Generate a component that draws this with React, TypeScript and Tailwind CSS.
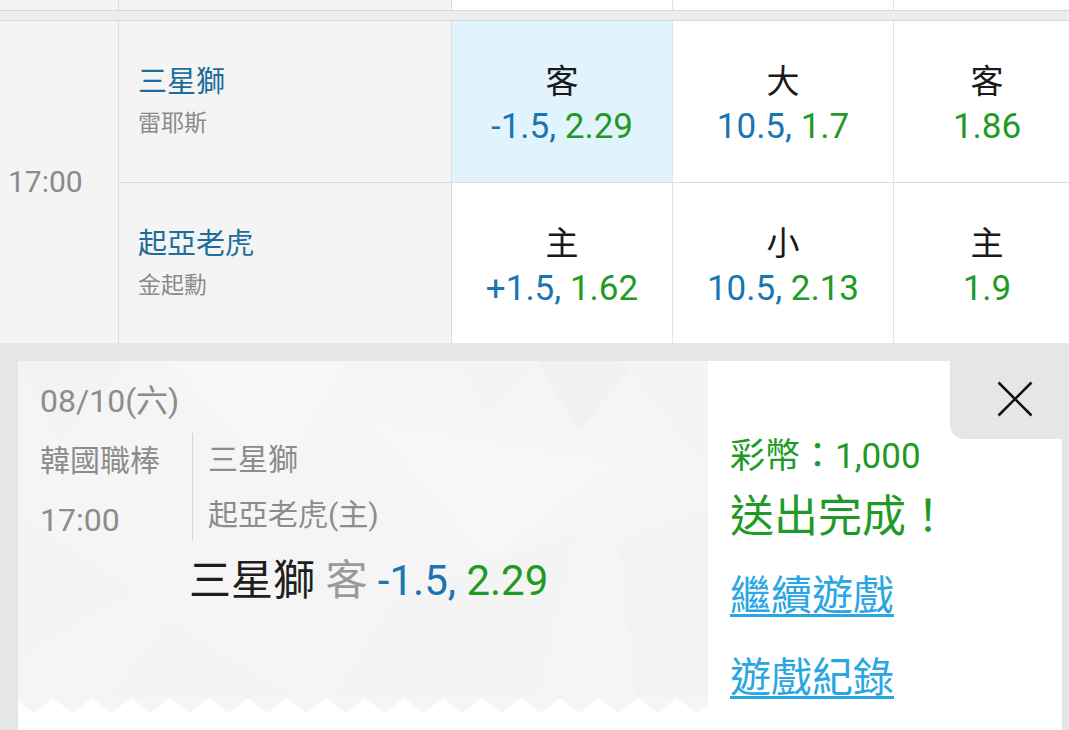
import React from "react";

const FONT = "font-['Roboto','Noto_Sans_CJK_TC',sans-serif]";

function OddsCell({
  label,
  blue,
  green,
  w,
  active,
  last,
}: {
  label: string;
  blue?: string;
  green: string;
  w: string;
  active?: boolean;
  last?: boolean;
}) {
  return (
    <div
      className={`${w} flex flex-col items-center pt-[41px] ${active ? "bg-[#e1f3fc]" : "bg-white"} ${last ? "pl-[11px]" : "border-r border-[#dfe4e8]"}`}
    >
      <div className="text-[33px] leading-[40px] text-[#1a1a1a]">{label}</div>
      <div className="text-[35px] leading-[40px] mt-[5px] whitespace-nowrap">
        {blue && <span className="text-[#1b75b2]">{blue}, </span>}
        <span className="text-[#1f9a24]">{green}</span>
      </div>
    </div>
  );
}

function TeamRow({ name, pitcher, border }: { name: string; pitcher: string; border?: boolean }) {
  return (
    <div className={`flex-1 flex flex-col pt-[43px] pl-[19px] ${border ? "border-b border-[#dcdcdc]" : ""}`}>
      <div className="text-[29px] leading-[36px] text-[#1d6d9b]">{name}</div>
      <div className="text-[23px] leading-[30px] text-[#8a8a8a] mt-[9px]">{pitcher}</div>
    </div>
  );
}

export default function App() {
  return (
    <div className={`${FONT} w-[1069px] h-[730px] overflow-hidden bg-[#e6e6e6] flex flex-col`}>
      {/* partial previous row */}
      <div className="h-[10px] flex shrink-0">
        <div className="w-[119px] bg-[#f4f4f4] border-r border-[#dcdcdc]" />
        <div className="w-[333px] bg-[#f4f4f4] border-r border-[#dcdcdc]" />
        <div className="w-[221px] bg-white border-r border-[#dfe4e8]" />
        <div className="w-[221px] bg-white border-r border-[#dfe4e8]" />
        <div className="flex-1 bg-white" />
      </div>
      {/* separator */}
      <div className="h-[11px] shrink-0 bg-[#ededed] border-y border-[#d9d9d9]" />
      {/* main row */}
      <div className="h-[322px] flex shrink-0">
        <div className="w-[119px] bg-[#f4f4f4] border-r border-[#dcdcdc] flex items-center pl-[8px]">
          <span className="text-[30px] text-[#8a8a8a] leading-none">17:00</span>
        </div>
        <div className="w-[333px] bg-[#f4f4f4] border-r border-[#dcdcdc] flex flex-col">
          <TeamRow name="三星獅" pitcher="雷耶斯" border />
          <TeamRow name="起亞老虎" pitcher="金起勳" />
        </div>
        <div className="flex-1 flex flex-col">
          <div className="h-[162px] flex border-b border-[#dcdcdc]">
            <OddsCell w="w-[221px]" label="客" blue="-1.5" green="2.29" active />
            <OddsCell w="w-[221px]" label="大" blue="10.5" green="1.7" />
            <OddsCell w="flex-1" label="客" green="1.86" last />
          </div>
          <div className="h-[160px] flex">
            <OddsCell w="w-[221px]" label="主" blue="+1.5" green="1.62" />
            <OddsCell w="w-[221px]" label="小" blue="10.5" green="2.13" />
            <OddsCell w="flex-1" label="主" green="1.9" last />
          </div>
        </div>
      </div>
      {/* ticket panel */}
      <div className="flex-1 pt-[18px] pl-[18px] pr-[7px]">
        <div className="relative h-full bg-white flex">
          {/* left ticket */}
          <div className="relative w-[690px] h-[352px] bg-[#f5f5f5] overflow-hidden">
            <svg className="absolute inset-0" width="690" height="352" viewBox="0 0 690 352">
              <polygon points="0,0 110,0 40,80" fill="#f3f3f3" />
              <polygon points="150,0 330,0 260,120" fill="#f7f7f7" />
              <polygon points="520,0 620,0 560,70" fill="#f1f1f1" />
              <polygon points="600,0 690,0 690,110" fill="#f4f4f4" />
              <polygon points="440,0 520,0 470,60" fill="#f4f4f4" />
              <polygon points="0,150 120,230 0,300" fill="#f4f4f4" />
              <polygon points="380,230 560,170 520,352 300,352" fill="#f4f4f4" />
              <polygon points="150,260 300,352 80,352" fill="#f3f3f3" />
              <polygon points="600,180 690,150 690,352 620,352" fill="#f3f3f3" />
              <polygon points="350,60 600,100 470,200" fill="#f7f7f7" />
            </svg>
            <div className="relative flex flex-col pl-[22px] pt-[20px]">
              <div className="text-[32px] leading-[40px] text-[#8c8c8c]">08/10(六)</div>
              <div className="flex mt-[12px]">
                <div className="w-[153px] flex flex-col border-r border-[#d6d6d6]">
                  <div className="text-[30px] leading-[40px] text-[#8c8c8c] pt-[8px]">韓國職棒</div>
                  <div className="text-[32px] leading-[40px] text-[#8c8c8c] mt-[19px] pb-[1px]">17:00</div>
                </div>
                <div className="flex flex-col pl-[15px]">
                  <div className="text-[30px] leading-[40px] text-[#8c8c8c] pt-[7px]">三星獅</div>
                  <div className="text-[30px] leading-[40px] text-[#8c8c8c] mt-[15px]">起亞老虎(主)</div>
                </div>
              </div>
              <div className="ml-[149px] mt-[15px] text-[42px] leading-[50px] whitespace-nowrap">
                <span className="text-[#1e1e1e]">三星獅 </span>
                <span className="text-[#9a9a9a]">客 </span>
                <span className="text-[#1b75b2]">-1.5, </span>
                <span className="text-[#1f9a24]">2.29</span>
              </div>
            </div>
            {/* zigzag edge */}
            <svg className="absolute left-0 bottom-0" width="690" height="16" viewBox="0 0 690 16">
              <defs>
                <pattern id="zz" width="39" height="16" patternUnits="userSpaceOnUse" x="15.5">
                  <rect width="39" height="16" fill="#f5f5f5" />
                  <polygon points="0,16 19.5,1 39,16" fill="#ffffff" />
                </pattern>
              </defs>
              <rect width="690" height="16" fill="url(#zz)" />
            </svg>
          </div>
          {/* right */}
          <div className="flex-1 flex flex-col pl-[22px] pt-[74px]">
            <div className="text-[35px] leading-[44px] text-[#1f9a24] whitespace-nowrap">彩幣：1,000</div>
            <div className="text-[44px] leading-[56px] text-[#1f9a24] mt-[10px] whitespace-nowrap">送出完成！</div>
            <div className="text-[41px] leading-[52px] text-[#2aa6e2] underline underline-offset-[4px] decoration-[3px] mt-[25px] whitespace-nowrap">繼續遊戲</div>
            <div className="text-[41px] leading-[52px] text-[#2aa6e2] underline underline-offset-[4px] decoration-[3px] mt-[30px] whitespace-nowrap">遊戲紀錄</div>
          </div>
          {/* close */}
          <div className="absolute right-0 top-0 w-[112px] h-[78px] bg-[#e6e6e6] rounded-bl-[14px] pl-[47px] pt-[20px]">
            <svg width="36" height="36" viewBox="0 0 36 36">
              <path d="M1.5 1.5 L34.5 34.5 M34.5 1.5 L1.5 34.5" stroke="#111" strokeWidth="2.6" fill="none" />
            </svg>
          </div>
        </div>
      </div>
    </div>
  );
}
